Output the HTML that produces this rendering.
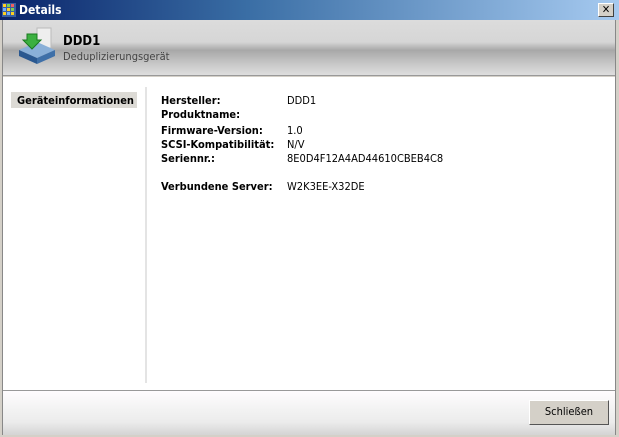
<!DOCTYPE html>
<html><head><meta charset="utf-8"><style>
*{margin:0;padding:0;box-sizing:border-box}
body{width:619px;height:437px;overflow:hidden;background:#d4d0c8;font-family:Tahoma,"DejaVu Sans Condensed","Liberation Sans",sans-serif;font-size:11px;color:#000;position:relative}
.title{position:absolute;left:0;top:0;width:619px;height:20px;background:linear-gradient(90deg,#0a246a,#3a6ea5 40%,#a6caf0);color:#fff;font-weight:bold;font-size:12px}
.title span{position:absolute;left:19px;top:3px}
.close{position:absolute;left:598px;top:3px;width:16px;height:14px;background:#d4d0c8;border:1px solid;border-color:#fff #404040 #404040 #fff;font-size:11px;line-height:11px;text-align:center;color:#000;font-weight:bold}
.win{position:absolute;left:2px;top:20px;width:614px;height:415px;border-left:1px solid #888;border-right:1px solid #888;border-bottom:1px solid #888}
.hdr{position:absolute;left:0;top:0;width:612px;height:56px;background:linear-gradient(#dcdcdc,#d6d6d6 40%,#a8a8a8 55%,#c8c8c8 80%,#dedede);border-bottom:1px solid #999}
.body{position:absolute;left:0;top:57px;width:612px;height:313px;background:#fff}
.ftr{position:absolute;left:0;top:370px;width:612px;height:45px;border-top:1px solid #999;background:linear-gradient(#fffcfe,#f3f3f3 40%,#ececec 70%,#d4d4d4)}
.btn{position:absolute;left:526px;top:9px;width:80px;height:25px;background:#d4d0c8;border:1px solid;border-color:#fff #555 #555 #fff;text-align:center;line-height:22px;font-size:11px}
.sel{position:absolute;left:8px;top:15px;width:126px;height:16px;background:#dcdad5;font-weight:bold;padding:2px 0 0 6px}
.sep{position:absolute;left:142px;top:10px;width:2px;height:296px;background:#e4e4e4}
.t{position:absolute;white-space:nowrap}
.b{font-weight:bold}
</style></head><body>
<div class="title">
<svg style="position:absolute;left:2px;top:3px" width="14" height="14"><rect width="14" height="14" fill="#3a5fa0"/><g fill="#ffd020"><rect x="1" y="1" width="3" height="3"/><rect x="5" y="1" width="3" height="3" fill="#7fd050"/><rect x="9" y="1" width="3" height="3" fill="#f06060"/><rect x="1" y="5" width="3" height="3" fill="#70b0ff"/><rect x="5" y="5" width="3" height="3"/><rect x="9" y="5" width="3" height="3" fill="#7fd050"/><rect x="1" y="9" width="3" height="3"/><rect x="5" y="9" width="3" height="3" fill="#70b0ff"/><rect x="9" y="9" width="3" height="3"/></g></svg>
<span>Details</span></div>
<div class="close">✕</div>
<div class="win">
<div class="hdr">
<svg style="position:absolute;left:12px;top:6px" width="42" height="40">
<rect x="22" y="2" width="14" height="20" fill="#eee" stroke="#bbb"/>
<path d="M4 24 L22 16 L40 24 L22 32 Z" fill="#8ab0d8"/>
<path d="M4 24 L22 32 L22 38 L4 30 Z" fill="#2a5890"/>
<path d="M22 32 L40 24 L40 30 L22 38 Z" fill="#3f70a8"/>
<path d="M12 8 L22 8 L22 14 L26 14 L17 23 L8 14 L12 14 Z" fill="#3bb040" stroke="#1a7a20"/>
</svg>
<div class="t b" style="left:60px;top:14px;font-size:13px">DDD1</div>
<div class="t" style="left:60px;top:30px;color:#444">Deduplizierungsgerät</div>
</div>
<div class="body">
<div class="sel">Geräteinformationen</div>
<div class="sep"></div>
<div class="t b" style="left:158px;top:17px">Hersteller:</div><div class="t" style="left:284px;top:17px">DDD1</div>
<div class="t b" style="left:158px;top:31px">Produktname:</div>
<div class="t b" style="left:158px;top:47px">Firmware-Version:</div><div class="t" style="left:284px;top:47px">1.0</div>
<div class="t b" style="left:158px;top:61px">SCSI-Kompatibilität:</div><div class="t" style="left:284px;top:61px">N/V</div>
<div class="t b" style="left:158px;top:75px">Seriennr.:</div><div class="t" style="left:284px;top:75px">8E0D4F12A4AD44610CBEB4C8</div>
<div class="t b" style="left:158px;top:103px">Verbundene Server:</div><div class="t" style="left:284px;top:103px">W2K3EE-X32DE</div>
</div>
<div class="ftr"><div class="btn">Schließen</div></div>
</div>
</body></html>
